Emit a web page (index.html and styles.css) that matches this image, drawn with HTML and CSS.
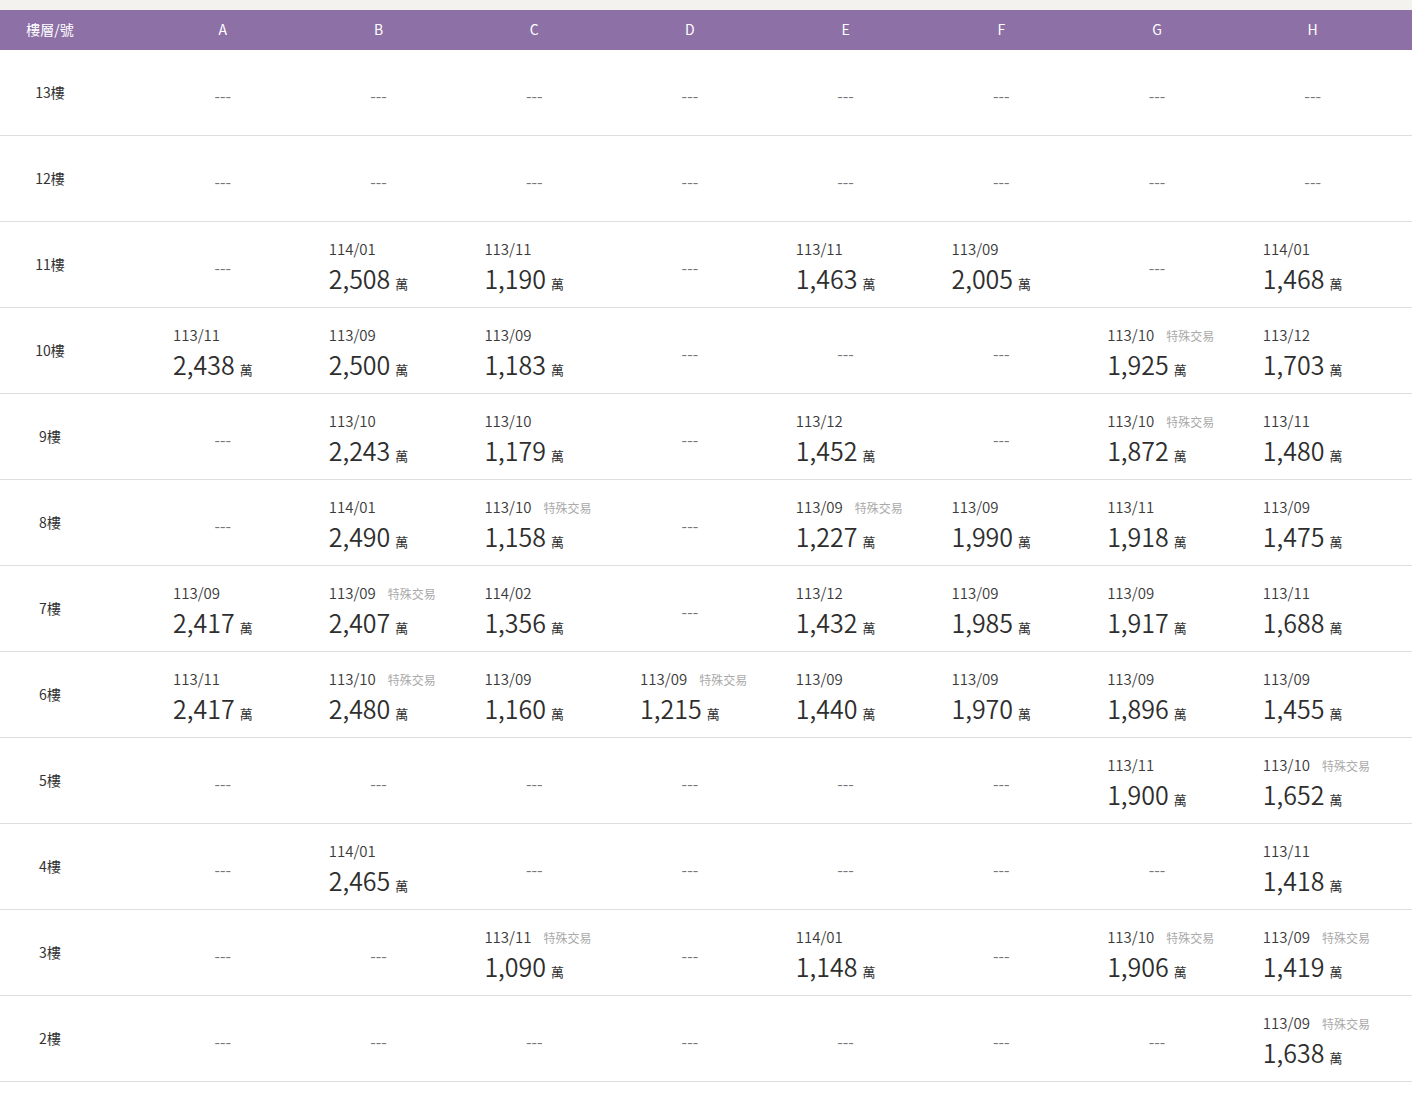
FILE: index.html
```html
<!DOCTYPE html>
<html lang="zh-Hant">
<head>
<meta charset="utf-8">
<title>樓層價格表</title>
<link rel="stylesheet" href="styles.css">
</head>
<body>
<div class="topstrip"></div>
<div class="table">
  <div class="row head">
    <div class="floor">樓層/號</div>
    <div class="hc">A</div><div class="hc">B</div><div class="hc">C</div><div class="hc">D</div>
    <div class="hc">E</div><div class="hc">F</div><div class="hc">G</div><div class="hc">H</div>
  </div>

  <div class="row">
    <div class="floor">13樓</div>
    <div class="cell empty">---</div><div class="cell empty">---</div><div class="cell empty">---</div><div class="cell empty">---</div>
    <div class="cell empty">---</div><div class="cell empty">---</div><div class="cell empty">---</div><div class="cell empty">---</div>
  </div>

  <div class="row">
    <div class="floor">12樓</div>
    <div class="cell empty">---</div><div class="cell empty">---</div><div class="cell empty">---</div><div class="cell empty">---</div>
    <div class="cell empty">---</div><div class="cell empty">---</div><div class="cell empty">---</div><div class="cell empty">---</div>
  </div>

  <div class="row">
    <div class="floor">11樓</div>
    <div class="cell empty">---</div>
    <div class="cell"><div class="date">114/01</div><div class="price">2,508<span class="unit">萬</span></div></div>
    <div class="cell"><div class="date">113/11</div><div class="price">1,190<span class="unit">萬</span></div></div>
    <div class="cell empty">---</div>
    <div class="cell"><div class="date">113/11</div><div class="price">1,463<span class="unit">萬</span></div></div>
    <div class="cell"><div class="date">113/09</div><div class="price">2,005<span class="unit">萬</span></div></div>
    <div class="cell empty">---</div>
    <div class="cell"><div class="date">114/01</div><div class="price">1,468<span class="unit">萬</span></div></div>
  </div>

  <div class="row">
    <div class="floor">10樓</div>
    <div class="cell"><div class="date">113/11</div><div class="price">2,438<span class="unit">萬</span></div></div>
    <div class="cell"><div class="date">113/09</div><div class="price">2,500<span class="unit">萬</span></div></div>
    <div class="cell"><div class="date">113/09</div><div class="price">1,183<span class="unit">萬</span></div></div>
    <div class="cell empty">---</div>
    <div class="cell empty">---</div>
    <div class="cell empty">---</div>
    <div class="cell"><div class="date">113/10<span class="tag">特殊交易</span></div><div class="price">1,925<span class="unit">萬</span></div></div>
    <div class="cell"><div class="date">113/12</div><div class="price">1,703<span class="unit">萬</span></div></div>
  </div>

  <div class="row">
    <div class="floor">9樓</div>
    <div class="cell empty">---</div>
    <div class="cell"><div class="date">113/10</div><div class="price">2,243<span class="unit">萬</span></div></div>
    <div class="cell"><div class="date">113/10</div><div class="price">1,179<span class="unit">萬</span></div></div>
    <div class="cell empty">---</div>
    <div class="cell"><div class="date">113/12</div><div class="price">1,452<span class="unit">萬</span></div></div>
    <div class="cell empty">---</div>
    <div class="cell"><div class="date">113/10<span class="tag">特殊交易</span></div><div class="price">1,872<span class="unit">萬</span></div></div>
    <div class="cell"><div class="date">113/11</div><div class="price">1,480<span class="unit">萬</span></div></div>
  </div>

  <div class="row">
    <div class="floor">8樓</div>
    <div class="cell empty">---</div>
    <div class="cell"><div class="date">114/01</div><div class="price">2,490<span class="unit">萬</span></div></div>
    <div class="cell"><div class="date">113/10<span class="tag">特殊交易</span></div><div class="price">1,158<span class="unit">萬</span></div></div>
    <div class="cell empty">---</div>
    <div class="cell"><div class="date">113/09<span class="tag">特殊交易</span></div><div class="price">1,227<span class="unit">萬</span></div></div>
    <div class="cell"><div class="date">113/09</div><div class="price">1,990<span class="unit">萬</span></div></div>
    <div class="cell"><div class="date">113/11</div><div class="price">1,918<span class="unit">萬</span></div></div>
    <div class="cell"><div class="date">113/09</div><div class="price">1,475<span class="unit">萬</span></div></div>
  </div>

  <div class="row">
    <div class="floor">7樓</div>
    <div class="cell"><div class="date">113/09</div><div class="price">2,417<span class="unit">萬</span></div></div>
    <div class="cell"><div class="date">113/09<span class="tag">特殊交易</span></div><div class="price">2,407<span class="unit">萬</span></div></div>
    <div class="cell"><div class="date">114/02</div><div class="price">1,356<span class="unit">萬</span></div></div>
    <div class="cell empty">---</div>
    <div class="cell"><div class="date">113/12</div><div class="price">1,432<span class="unit">萬</span></div></div>
    <div class="cell"><div class="date">113/09</div><div class="price">1,985<span class="unit">萬</span></div></div>
    <div class="cell"><div class="date">113/09</div><div class="price">1,917<span class="unit">萬</span></div></div>
    <div class="cell"><div class="date">113/11</div><div class="price">1,688<span class="unit">萬</span></div></div>
  </div>

  <div class="row">
    <div class="floor">6樓</div>
    <div class="cell"><div class="date">113/11</div><div class="price">2,417<span class="unit">萬</span></div></div>
    <div class="cell"><div class="date">113/10<span class="tag">特殊交易</span></div><div class="price">2,480<span class="unit">萬</span></div></div>
    <div class="cell"><div class="date">113/09</div><div class="price">1,160<span class="unit">萬</span></div></div>
    <div class="cell"><div class="date">113/09<span class="tag">特殊交易</span></div><div class="price">1,215<span class="unit">萬</span></div></div>
    <div class="cell"><div class="date">113/09</div><div class="price">1,440<span class="unit">萬</span></div></div>
    <div class="cell"><div class="date">113/09</div><div class="price">1,970<span class="unit">萬</span></div></div>
    <div class="cell"><div class="date">113/09</div><div class="price">1,896<span class="unit">萬</span></div></div>
    <div class="cell"><div class="date">113/09</div><div class="price">1,455<span class="unit">萬</span></div></div>
  </div>

  <div class="row">
    <div class="floor">5樓</div>
    <div class="cell empty">---</div><div class="cell empty">---</div><div class="cell empty">---</div>
    <div class="cell empty">---</div><div class="cell empty">---</div><div class="cell empty">---</div>
    <div class="cell"><div class="date">113/11</div><div class="price">1,900<span class="unit">萬</span></div></div>
    <div class="cell"><div class="date">113/10<span class="tag">特殊交易</span></div><div class="price">1,652<span class="unit">萬</span></div></div>
  </div>

  <div class="row">
    <div class="floor">4樓</div>
    <div class="cell empty">---</div>
    <div class="cell"><div class="date">114/01</div><div class="price">2,465<span class="unit">萬</span></div></div>
    <div class="cell empty">---</div><div class="cell empty">---</div><div class="cell empty">---</div>
    <div class="cell empty">---</div><div class="cell empty">---</div>
    <div class="cell"><div class="date">113/11</div><div class="price">1,418<span class="unit">萬</span></div></div>
  </div>

  <div class="row">
    <div class="floor">3樓</div>
    <div class="cell empty">---</div>
    <div class="cell empty">---</div>
    <div class="cell"><div class="date">113/11<span class="tag">特殊交易</span></div><div class="price">1,090<span class="unit">萬</span></div></div>
    <div class="cell empty">---</div>
    <div class="cell"><div class="date">114/01</div><div class="price">1,148<span class="unit">萬</span></div></div>
    <div class="cell empty">---</div>
    <div class="cell"><div class="date">113/10<span class="tag">特殊交易</span></div><div class="price">1,906<span class="unit">萬</span></div></div>
    <div class="cell"><div class="date">113/09<span class="tag">特殊交易</span></div><div class="price">1,419<span class="unit">萬</span></div></div>
  </div>

  <div class="row">
    <div class="floor">2樓</div>
    <div class="cell empty">---</div><div class="cell empty">---</div><div class="cell empty">---</div><div class="cell empty">---</div>
    <div class="cell empty">---</div><div class="cell empty">---</div><div class="cell empty">---</div>
    <div class="cell"><div class="date">113/09<span class="tag">特殊交易</span></div><div class="price">1,638<span class="unit">萬</span></div></div>
  </div>

  <div class="row">
    <div class="floor">1樓</div>
    <div class="cell empty">---</div>
    <div class="cell"><div class="date">113/09<span class="tag">特殊交易</span></div><div class="price">1,988<span class="unit">萬</span></div></div>
    <div class="cell empty">---</div><div class="cell empty">---</div><div class="cell empty">---</div>
    <div class="cell empty">---</div><div class="cell empty">---</div><div class="cell empty">---</div>
  </div>
</div>
</body>
</html>
```

FILE: styles.css
```css
* { box-sizing: border-box; }
html, body { margin: 0; padding: 0; background: #fff; }
body {
  font-family: "Noto Sans CJK TC", "Noto Sans", sans-serif;
  color: #333;
}
.topstrip { height: 10px; background: #f3f2ef; }
.table { width: 100%; }
.row {
  display: grid;
  grid-template-columns: 145px repeat(8, 155.7px) 1fr;
  height: 86px;
  border-bottom: 1px solid #dedede;
}
.row.head {
  height: 40px;
  border-bottom: 0;
  background: #8d70a6;
  color: #fff;
}
.floor {
  display: flex;
  align-items: center;
  justify-content: center;
  padding-right: 45px;
  padding-bottom: 2px;
  font-size: 14px;
  color: #333;
}
.head .floor { color: #fff; font-size: 14px; padding-bottom: 2px; }
.hc {
  display: flex;
  align-items: center;
  justify-content: center;
  font-size: 14px;
  padding-bottom: 2px;
}
.cell {
  display: flex;
  flex-direction: column;
  justify-content: center;
  padding-left: 28px;
  padding-top: 10px;
  white-space: nowrap;
}
.cell.empty {
  padding-left: 0;
  align-items: center;
  font-size: 16px;
  color: #777;
  padding-top: 4px;
}
.date {
  font-size: 15px;
  line-height: 20px;
  font-weight: 350;
  color: #3a3a3a;
}
.tag {
  font-size: 12px;
  line-height: 12px;
  font-weight: 400;
  color: #aaa;
  margin-left: 12px;
}
.price {
  font-size: 25px;
  line-height: 34px;
  font-weight: 350;
  margin-top: 2px;
  color: #2e2e2e;
}
.unit {
  font-size: 13px;
  font-weight: 400;
  margin-left: 5px;
  color: #333;
}
```
